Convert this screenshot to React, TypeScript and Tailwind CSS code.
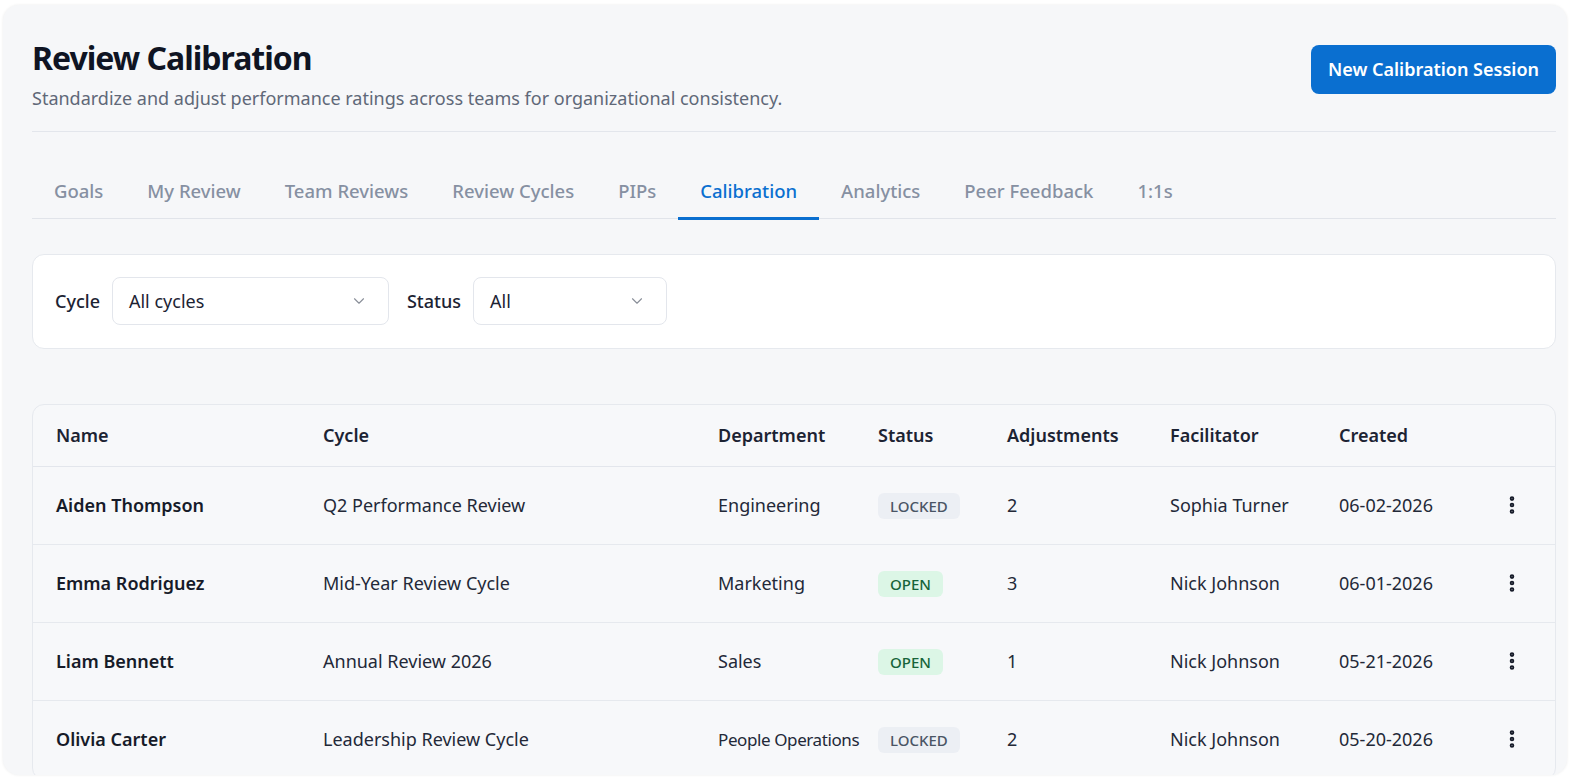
import { ChevronDown, MoreVertical } from 'lucide-react';

type Row = {
  name: string;
  cycle: string;
  department: string;
  status: 'LOCKED' | 'OPEN';
  adjustments: number;
  facilitator: string;
  created: string;
};

const tabs = ['Goals', 'My Review', 'Team Reviews', 'Review Cycles', 'PIPs', 'Calibration', 'Analytics', 'Peer Feedback', '1:1s'];

const rows: Row[] = [
  { name: 'Aiden Thompson', cycle: 'Q2 Performance Review', department: 'Engineering', status: 'LOCKED', adjustments: 2, facilitator: 'Sophia Turner', created: '06-02-2026' },
  { name: 'Emma Rodriguez', cycle: 'Mid-Year Review Cycle', department: 'Marketing', status: 'OPEN', adjustments: 3, facilitator: 'Nick Johnson', created: '06-01-2026' },
  { name: 'Liam Bennett', cycle: 'Annual Review 2026', department: 'Sales', status: 'OPEN', adjustments: 1, facilitator: 'Nick Johnson', created: '05-21-2026' },
  { name: 'Olivia Carter', cycle: 'Leadership Review Cycle', department: 'People Operations', status: 'LOCKED', adjustments: 2, facilitator: 'Nick Johnson', created: '05-20-2026' },
];

const cols = 'grid grid-cols-[267px_395px_160px_129px_163px_169px_162px_1fr] items-center pl-[23px]';

const StatusBadge = ({ status }: { status: Row['status'] }) =>
  status === 'OPEN' ? (
    <span className="inline-block rounded-md bg-[#dcf6e6] px-[12px] py-[2px] text-[15px] font-medium text-[#17643a]">OPEN</span>
  ) : (
    <span className="inline-block rounded-md bg-[#eceff4] px-[12px] py-[2px] text-[15px] font-medium text-[#4a5565]">LOCKED</span>
  );

const App = () => {
  return (
    <div className="min-h-screen bg-white p-[3px] pt-[5px] font-['Noto_Sans',sans-serif]">
      <div className="h-[770px] overflow-hidden rounded-2xl bg-[#f6f7f9] pl-[29px] pr-[11px] shadow-[0_0_3px_rgba(0,0,0,0.08)]">
        {/* Header */}
        <div className="flex items-start justify-between border-b border-[#e3e6ec] pt-[33px] pb-[21px]">
          <div>
            <h1 className="text-[32px] font-bold leading-[40px] tracking-[-1px] text-[#0f1423]">Review Calibration</h1>
            <p className="mt-[8px] text-[18px] leading-[24px] text-[#5f6878]">
              Standardize and adjust performance ratings across teams for organizational consistency.
            </p>
          </div>
          <button className="mt-[7px] h-[49px] rounded-lg bg-[#0a6fd0] px-[17px] text-[18px] font-semibold text-white">
            New Calibration Session
          </button>
        </div>

        {/* Tabs */}
        <div className="mt-[45px] flex border-b border-[#e1e4ea]">
          {tabs.map((t) => (
            <div
              key={t}
              className={
                t === 'Calibration'
                  ? '-mb-[2px] border-b-[3px] border-[#0a6fd0] px-[22px] pb-[12px] text-[18.5px] font-medium text-[#0a6fd0]'
                  : 'px-[22px] pb-[12px] text-[18.5px] font-medium text-[#8690a2]'
              }
            >
              {t}
            </div>
          ))}
        </div>

        {/* Filters */}
        <div className="mt-[35px] flex h-[95px] items-center gap-[12px] rounded-xl border border-[#e6e9ee] bg-white px-[22px]">
          <span className="text-[18px] font-medium text-[#1c2333]">Cycle</span>
          <div className="flex h-[48px] w-[277px] items-center justify-between rounded-lg border border-[#e3e6ec] bg-white pl-[16px] pr-[20px] text-[18px] text-[#1c2333]">
            All cycles
            <ChevronDown className="h-[18px] w-[18px] text-[#8a8f99]" strokeWidth={1.5} />
          </div>
          <span className="ml-[6px] text-[18px] font-medium text-[#1c2333]">Status</span>
          <div className="flex h-[48px] w-[194px] items-center justify-between rounded-lg border border-[#e3e6ec] bg-white pl-[16px] pr-[20px] text-[18px] text-[#1c2333]">
            All
            <ChevronDown className="h-[18px] w-[18px] text-[#8a8f99]" strokeWidth={1.5} />
          </div>
        </div>

        {/* Table */}
        <div className="mt-[55px] rounded-xl border border-[#e6e9ee] bg-[#f7f8fa]">
          <div className={`${cols} h-[62px] border-b border-[#e3e6ec] text-[18px] font-semibold text-[#1c2333]`}>
            <div>Name</div>
            <div>Cycle</div>
            <div>Department</div>
            <div>Status</div>
            <div>Adjustments</div>
            <div>Facilitator</div>
            <div>Created</div>
            <div />
          </div>
          {rows.map((r) => (
            <div key={r.name} className={`${cols} h-[78px] border-b border-[#e6e9ee] text-[18px] text-[#232938]`}>
              <div className="font-semibold text-[#161b29]">{r.name}</div>
              <div>{r.cycle}</div>
              <div className={r.department.length > 14 ? 'text-[17px] tracking-[-0.4px]' : ''}>{r.department}</div>
              <div>
                <StatusBadge status={r.status} />
              </div>
              <div>{r.adjustments}</div>
              <div>{r.facilitator}</div>
              <div>{r.created}</div>
              <div>
                <MoreVertical className="h-[22px] w-[22px] text-[#161b29]" strokeWidth={3} />
              </div>
            </div>
          ))}
        </div>
      </div>
    </div>
  );
};

export default App;
